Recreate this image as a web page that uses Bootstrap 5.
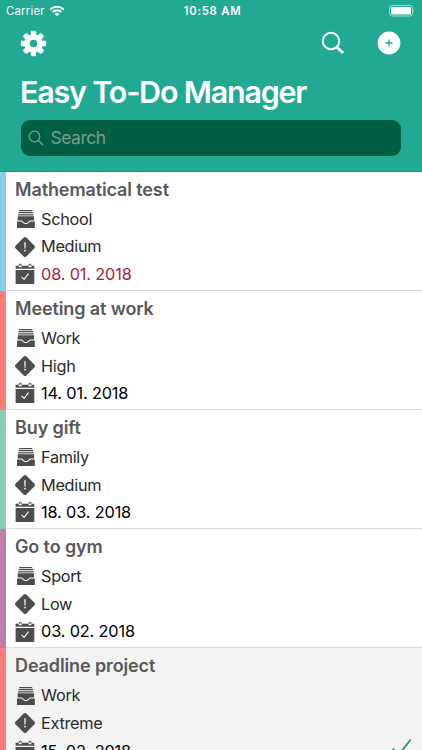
<!DOCTYPE html>
<html lang="en">
<head>
<meta charset="utf-8">
<meta name="viewport" content="width=device-width, initial-scale=1">
<title>Easy To-Do Manager</title>
<link rel="stylesheet" href="https://cdn.jsdelivr.net/npm/bootstrap@5.3.0/dist/css/bootstrap.min.css">
<style>
body{font-family:Inter,"Liberation Sans",sans-serif;background:#fff;color:#2a2a2a;height:750px}
.screen{height:750px}
.top-area{background:#22a993;height:171.5px;color:#fff;border-bottom:1px solid #25917f}
.status-bar{height:22px;font-size:11.3px;padding:0 7px 0 6px}
.status-bar>div{flex:1 1 0}
.status-bar>div:first-child{letter-spacing:.25px}
.status-time{font-weight:600;font-size:11.3px;letter-spacing:.75px;margin-left:4px}
.tool-bar{height:42px;padding:0 21.5px 0 20px}
.app-title{font-size:30.5px;font-weight:600;line-height:40px;letter-spacing:-1.22px;margin:8px 0 0 20px;white-space:nowrap}
.search-box{height:36px;margin:8px 21px 0 21px;background:#005f43;border-radius:9px;color:#7c9b8c;font-size:17.5px;letter-spacing:-.5px;padding-left:7px}
.search-box svg{margin-right:6.5px}
.task{height:119.15px;border-left:6px solid;padding-left:9px;flex:none;box-shadow:inset 0 -1px #dcdcdc}
.task-title{font-size:18px;font-weight:600;color:#595959;line-height:22px;margin:7px 0 0;height:26.7px;letter-spacing:-.12px}
.task-line{height:27.6px;font-size:16.3px;letter-spacing:-.3px}
.task-line svg{width:20px;height:22px;margin-right:6px;flex:none}
.task-date{color:#000;letter-spacing:-.14px}
.late{color:#a91d3c}
.blue{border-color:#87cdec}.coral{border-color:#ff7c78}.mint{border-color:#84d0b6}.plum{border-color:#c27ca8}
.task.done{background:#f3f3f3}
.done-mark{position:absolute;right:10px;top:90px}
</style>
<script src="https://cdn.jsdelivr.net/npm/bootstrap@5.3.0/dist/js/bootstrap.bundle.min.js"></script>
</head>
<body>
<svg class="d-none">
 <symbol id="tray" viewBox="0 0 20 22"><path d="M4.200 2.700h13M3.600 4.700h14.400M3 6.800h15.600" stroke="#4d4d4d" stroke-width="1.200"/><path d="M2.700 8.200h16.400v4.300h-3.800c-1.600 0-1.500 2.500-4.400 2.500s-2.800-2.500-4.400-2.500H2.700zM2 13.600h4.300c1.200 0 1.400 2.500 4.600 2.500s3.400-2.500 4.600-2.500h4.300v6.300H2z" fill="#4d4d4d"/></symbol>
 <symbol id="priority" viewBox="0 0 20 22"><path d="M8.700 1.500q1.300-1 2.600 0l8.200 8.200q1 1.300 0 2.600l-8.200 8.200q-1.300 1-2.600 0L.5 12.300q-1-1.300 0-2.600z" fill="#4d4d4d"/><path d="M9.300 6.300h1.400l-.2 6.400h-1z" fill="#fff"/><circle cx="10" cy="14.600" r=".9" fill="#fff"/></symbol>
 <symbol id="date" viewBox="0 0 20 22"><path d="M.6 2.700h3.200v1.500h2.900V2.700h6.800v1.500h2.900V2.700h2.900v3H.6zM.6 7h18.700v14H.6z" fill="#4d4d4d"/><path d="M4.300 3V1.300h1.900V3M14 3V1.300h1.900V3" stroke="#4d4d4d" stroke-width=".9" fill="none"/><path d="M6.600 13.800l2.500 2.600 4.400-5.700" stroke="#fff" stroke-width="1.100" fill="none"/></symbol>
</svg>
<div class="screen d-flex flex-column overflow-hidden">
<header class="top-area flex-shrink-0">
 <div class="status-bar d-flex align-items-center">
  <div class="d-flex align-items-center"><span>Carrier</span>
   <svg class="ms-1" width="16" height="12" viewBox="0 0 16 12" fill="none" stroke="#fff" stroke-width="1.900"><path d="M1.300 4.500a9.500 9.500 0 0 1 13.400 0M3.700 7a6 6 0 0 1 8.600 0"/><path d="M8 11.200L5.700 8.900a3.300 3.300 0 0 1 4.600 0z" fill="#fff" stroke="none"/></svg></div>
  <span class="status-time">10:58 AM</span>
  <div class="d-flex justify-content-end"><svg width="26" height="12" viewBox="0 0 26 12"><rect x=".5" y=".5" width="23" height="10.500" rx="2.300" fill="none" stroke="#9bdacf"/><rect x="2" y="2" width="20" height="7.500" rx="1" fill="#fff"/><path d="M24.500 4q1.500 1.700 0 3.500z" fill="#9bdacf"/></svg></div>
 </div>
 <div class="tool-bar d-flex align-items-center">
  <svg class="me-auto" width="27" height="27" viewBox="-13.500 -13.500 27 27"><g fill="#fff"><g id="cog"><rect x="-2.700" y="-12.700" width="5.400" height="25.400" rx="1.200"/><rect x="-12.700" y="-2.700" width="25.400" height="5.400" rx="1.200"/></g><use href="#cog" transform="rotate(45)"/><circle r="9.300"/></g><circle r="3.800" fill="#22a993"/></svg>
  <svg class="me-4" width="24" height="24" viewBox="0 0 24 24" fill="none" stroke="#fff"><circle cx="10" cy="10" r="8.200" stroke-width="2"/><path d="M15.700 16l6.300 6" stroke-width="3"/></svg>
  <svg class="ms-2" width="24" height="24" viewBox="0 0 24 24"><circle cx="12" cy="12" r="11.400" fill="#fff"/><path d="M8.500 12h7M12 8.500v7" stroke="#22a993" stroke-width="1.300"/></svg>
 </div>
 <h1 class="app-title">Easy To-Do Manager</h1>
 <div class="search-box d-flex align-items-center"><svg width="16" height="16" viewBox="0 0 16 16" fill="none" stroke="#7c9b8c" stroke-width="1.200"><circle cx="6.500" cy="6.500" r="5.300"/><path d="M10.500 10.500l4.500 4.500" stroke-width="1.500"/></svg><span>Search</span></div>
</header>
<main>
 <section class="task blue d-flex flex-column"><h2 class="task-title">Mathematical test</h2>
  <div class="task-line d-flex align-items-center"><svg><use href="#tray"/></svg><span>School</span></div>
  <div class="task-line d-flex align-items-center"><svg><use href="#priority"/></svg><span>Medium</span></div>
  <div class="task-line task-date late d-flex align-items-center"><svg><use href="#date"/></svg><span>08. 01. 2018</span></div></section>
 <section class="task coral d-flex flex-column"><h2 class="task-title">Meeting at work</h2>
  <div class="task-line d-flex align-items-center"><svg><use href="#tray"/></svg><span>Work</span></div>
  <div class="task-line d-flex align-items-center"><svg><use href="#priority"/></svg><span>High</span></div>
  <div class="task-line task-date d-flex align-items-center"><svg><use href="#date"/></svg><span>14. 01. 2018</span></div></section>
 <section class="task mint d-flex flex-column"><h2 class="task-title">Buy gift</h2>
  <div class="task-line d-flex align-items-center"><svg><use href="#tray"/></svg><span>Family</span></div>
  <div class="task-line d-flex align-items-center"><svg><use href="#priority"/></svg><span>Medium</span></div>
  <div class="task-line task-date d-flex align-items-center"><svg><use href="#date"/></svg><span>18. 03. 2018</span></div></section>
 <section class="task plum d-flex flex-column"><h2 class="task-title">Go to gym</h2>
  <div class="task-line d-flex align-items-center"><svg><use href="#tray"/></svg><span>Sport</span></div>
  <div class="task-line d-flex align-items-center"><svg><use href="#priority"/></svg><span>Low</span></div>
  <div class="task-line task-date d-flex align-items-center"><svg><use href="#date"/></svg><span>03. 02. 2018</span></div></section>
 <section class="task coral done d-flex flex-column position-relative"><h2 class="task-title">Deadline project</h2>
  <div class="task-line d-flex align-items-center"><svg><use href="#tray"/></svg><span>Work</span></div>
  <div class="task-line d-flex align-items-center"><svg><use href="#priority"/></svg><span>Extreme</span></div>
  <div class="task-line task-date d-flex align-items-center"><svg><use href="#date"/></svg><span>15. 02. 2018</span></div>
  <svg class="done-mark" width="20" height="19" viewBox="0 0 20 19" fill="none" stroke="#2f9676" stroke-width="1.900"><path d="M.8 10.500l5.700 6.500L18.800 1.500"/></svg></section>
</main>
</div>
</body>
</html>
